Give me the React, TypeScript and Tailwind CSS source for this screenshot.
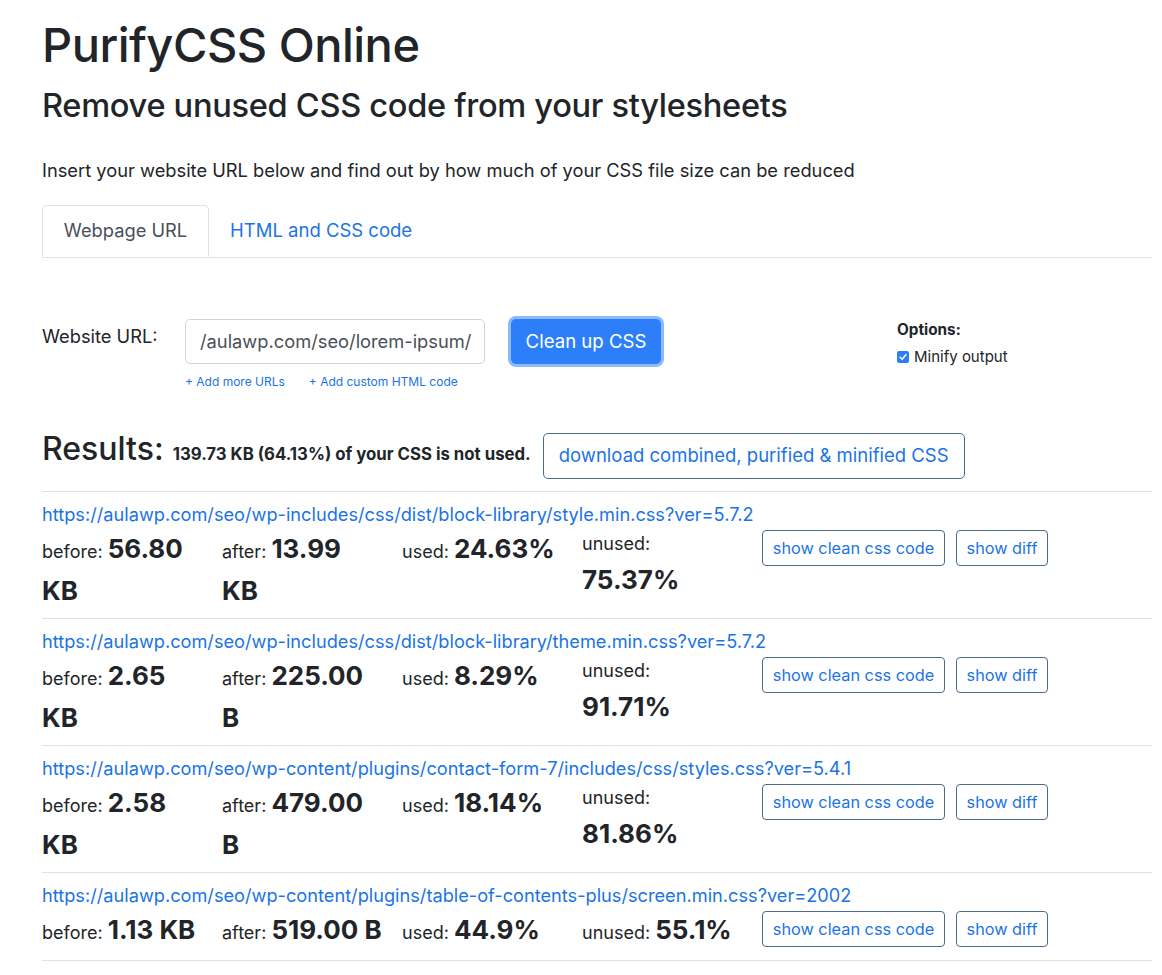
import React from 'react';

interface Stat {
	label: string;
	value: string;
	unit?: string;
	wrap?: boolean;
}

interface ResultRow {
	url: string;
	stats: Stat[];
}

const rows: ResultRow[] = [
	{
		url: 'https://aulawp.com/seo/wp-includes/css/dist/block-library/style.min.css?ver=5.7.2',
		stats: [
			{ label: 'before:', value: '56.80', unit: 'KB', wrap: true },
			{ label: 'after:', value: '13.99', unit: 'KB', wrap: true },
			{ label: 'used:', value: '24.63%' },
			{ label: 'unused:', value: '75.37%', wrap: true }
		]
	},
	{
		url: 'https://aulawp.com/seo/wp-includes/css/dist/block-library/theme.min.css?ver=5.7.2',
		stats: [
			{ label: 'before:', value: '2.65', unit: 'KB', wrap: true },
			{ label: 'after:', value: '225.00', unit: 'B', wrap: true },
			{ label: 'used:', value: '8.29%' },
			{ label: 'unused:', value: '91.71%', wrap: true }
		]
	},
	{
		url: 'https://aulawp.com/seo/wp-content/plugins/contact-form-7/includes/css/styles.css?ver=5.4.1',
		stats: [
			{ label: 'before:', value: '2.58', unit: 'KB', wrap: true },
			{ label: 'after:', value: '479.00', unit: 'B', wrap: true },
			{ label: 'used:', value: '18.14%' },
			{ label: 'unused:', value: '81.86%', wrap: true }
		]
	},
	{
		url: 'https://aulawp.com/seo/wp-content/plugins/table-of-contents-plus/screen.min.css?ver=2002',
		stats: [
			{ label: 'before:', value: '1.13', unit: 'KB' },
			{ label: 'after:', value: '519.00', unit: 'B' },
			{ label: 'used:', value: '44.9%' },
			{ label: 'unused:', value: '55.1%' }
		]
	}
];

const StatCell = ({ stat, isUnused }: { stat: Stat; isUnused: boolean }) => {
	// "unused" wraps after the label, the size columns wrap before the unit
	if (isUnused && stat.wrap) {
		return (
			<div className="w-[180px] shrink-0 -mt-[6px]">
				<div className="h-[36px] leading-[36px] text-[18px]">{stat.label}</div>
				<div className="h-[36px] leading-[36px] text-[26px] font-bold">{stat.value}</div>
			</div>
		);
	}
	return (
		<div className="w-[180px] shrink-0">
			<div className="h-[39px] leading-[39px] text-[18px]">
				<span className="leading-none">{stat.label} </span>
				<span className="leading-none text-[26px] font-bold">{stat.value}</span>
				{stat.unit && !stat.wrap && <span className="leading-none text-[26px] font-bold"> {stat.unit}</span>}
			</div>
			{stat.unit && stat.wrap && (
				<div className="h-[39px] leading-[39px] text-[26px] font-bold">{stat.unit}</div>
			)}
		</div>
	);
};

const App: React.FC = () => {
	return (
		<div className="bg-white min-h-screen pl-[42px] pr-[10px] pt-[17px] text-[#212529] font-['Inter','Liberation_Sans',sans-serif]">
			{/* Header */}
			<h1 className="text-[47px] leading-[56px] font-medium tracking-[-0.5px]">PurifyCSS Online</h1>
			<h2 className="mt-[10px] text-[32.6px] leading-[44px] font-medium tracking-[-0.3px]">Remove unused CSS code from your stylesheets</h2>
			<p className="mt-[29px] text-[18.3px] leading-[28px]">Insert your website URL below and find out by how much of your CSS file size can be reduced</p>

			{/* Tabs */}
			<div className="mt-[21px] flex border-b border-[#dee2e6]">
				<div className="-mb-px w-[167px] h-[52px] flex items-center justify-center border border-[#dee2e6] border-b-white rounded-t-[5px] bg-white text-[18.3px] text-[#495057]">
					Webpage URL
				</div>
				<div className="h-[52px] flex items-center px-[21px] text-[18.5px] text-[#1b74e4]">HTML and CSS code</div>
			</div>

			{/* URL form */}
			<div className="mt-[61px] flex items-start">
				<label className="w-[143px] text-[18.3px] leading-[34px]">Website URL:</label>
				<div className="w-[300px]">
					<div className="h-[45px] border border-[#ced4da] rounded-[5px] px-[14px] flex items-center text-[18.3px] text-[#495057] overflow-hidden whitespace-nowrap">
						/aulawp.com/seo/lorem-ipsum/
					</div>
					<div className="mt-[9px] flex gap-[24px] text-[12px] text-[#1b74e4]">
						<span>+ Add more URLs</span>
						<span>+ Add custom HTML code</span>
					</div>
				</div>
				<button className="ml-[26px] w-[150px] h-[45px] rounded-[5px] bg-[#2d7ff9] text-white text-[18.6px] ring-[3px] ring-[#8dbaf9]">
					Clean up CSS
				</button>
				<div className="ml-[236px] mt-[1px]">
					<div className="text-[15.3px] font-bold leading-[20px]">Options:</div>
					<label className="mt-[7px] flex items-center gap-[5px] text-[15px] leading-[20px]">
						<span className="w-[12px] h-[12px] rounded-[2px] bg-[#2d7ff9] flex items-center justify-center">
							<svg viewBox="0 0 12 12" className="w-[10px] h-[10px]">
								<path d="M2.5 6.2 L5 8.6 L9.5 3.2" fill="none" stroke="white" strokeWidth="1.8" strokeLinecap="round" strokeLinejoin="round" />
							</svg>
						</span>
						Minify output
					</label>
				</div>
			</div>

			{/* Results summary */}
			<div className="mt-[36px] flex items-start">
				<div className="mt-[2px] flex items-baseline">
					<span className="text-[32px] font-medium leading-[40px]">Results:</span>
					<span className="ml-[9px] text-[16.8px] font-bold">139.73 KB (64.13%) of your CSS is not used.</span>
				</div>
				<button className="mt-[6px] ml-[12px] h-[46px] px-[15px] border border-[#4a6b8f] rounded-[5px] text-[18.5px] text-[#1b74e4]">
					download combined, purified &amp; minified CSS
				</button>
			</div>

			{/* Result rows */}
			<div className="mt-[12px] border-b border-[#dee2e6]">
				{rows.map((row) => (
					<div key={row.url} className="border-t border-[#dee2e6] pt-[10px] pb-[8px]">
						<div className="text-[18.2px] leading-[24px] text-[#1b74e4]">{row.url}</div>
						<div className="mt-[6px] flex items-start">
							{row.stats.map((stat, i) => (
								<StatCell key={stat.label} stat={stat} isUnused={i === 3} />
							))}
							<div className="-mt-[2px] flex gap-[11px]">
								<button className="h-[36px] w-[183px] border border-[#4a6b8f] rounded-[4px] text-[16.3px] leading-none text-[#1b74e4]">show clean css code</button>
								<button className="h-[36px] w-[92px] border border-[#4a6b8f] rounded-[4px] text-[16.3px] leading-none text-[#1b74e4]">show diff</button>
							</div>
						</div>
					</div>
				))}
			</div>
		</div>
	);
};

export default App;
